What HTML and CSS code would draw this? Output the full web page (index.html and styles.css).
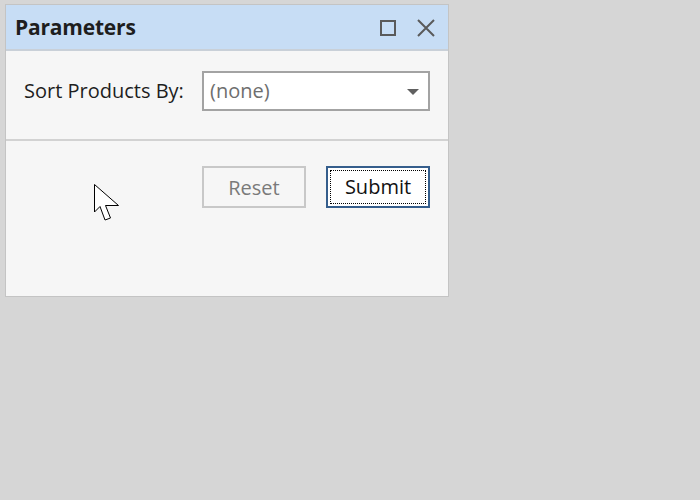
FILE: index.html
```html
<!DOCTYPE html>
<html>
<head>
<meta charset="utf-8">
<link rel="stylesheet" href="styles.css">
</head>
<body>
<div class="panel">
  <div class="header">
    <span class="title">Parameters</span>
    <div class="tools">
      <svg class="icon" width="18" height="18" viewBox="0 0 18 18"><rect x="2" y="2" width="14" height="14" fill="none" stroke="#5a5a5a" stroke-width="2"/></svg>
      <svg class="icon" width="20" height="20" viewBox="0 0 20 20"><path d="M2 2 L18 18 M18 2 L2 18" stroke="#5a5a5a" stroke-width="2" fill="none"/></svg>
    </div>
  </div>
  <div class="params">
    <span class="label">Sort Products By:</span>
    <div class="combo">
      <span class="value">(none)</span>
      <svg class="arrow" width="12" height="6" viewBox="0 0 12 6"><path d="M0 0 H12 L6 6 Z" fill="#606060"/></svg>
    </div>
  </div>
  <div class="actions">
    <div class="btn reset">Reset</div>
    <div class="btn submit"><span class="focus">Submit</span></div>
  </div>
</div>
<svg class="cursor" width="28" height="40" viewBox="0 0 28 40"><path d="M0.5 0.5 L0.5 28 L6 22.5 L11 36 L16.5 34 L11.5 21.5 L24.5 21.5 Z" fill="#fff" stroke="#000" stroke-width="1" stroke-linejoin="miter"/></svg>
</body>
</html>
```
FILE: styles.css
```css
html, body {
  margin: 0;
  padding: 0;
  background: #d6d6d6;
  font-family: "Open Sans", "Noto Sans", sans-serif;
}
body {
  width: 700px;
  height: 500px;
  position: relative;
  overflow: hidden;
}
.panel {
  margin: 4px 0 0 5px;
  width: 442px;
  border: 1px solid #c4c4c4;
  background: #f6f6f6;
}
.header {
  height: 44px;
  background: #c7ddf5;
  border-bottom: 2px solid #c9d0d8;
  display: flex;
  align-items: center;
  justify-content: space-between;
  padding: 0 12px 0 9px;
}
.title {
  font-weight: bold;
  font-size: 21px;
  color: #1e1e1e;
  letter-spacing: -0.2px;
}
.tools {
  display: flex;
  align-items: center;
  gap: 19px;
  padding-top: 1px;
}
.params {
  display: flex;
  align-items: flex-start;
  justify-content: space-between;
  padding: 20px 18px 0 18px;
  box-sizing: border-box;
  border-bottom: 2px solid #d2d2d2;
  height: 90px;
}
.label {
  font-size: 20px;
  color: #1e1e1e;
  line-height: 40px;
  padding-bottom: 2px;
}
.combo {
  height: 36px;
  border: 2px solid #a3a3a3;
  background: #fff;
  display: flex;
  align-items: center;
  justify-content: space-between;
  padding: 0 9px 0 6px;
  box-sizing: content-box;
  width: 209px;
}
.value {
  font-size: 20px;
  color: #6e6e6e;
  padding-bottom: 2px;
}
.arrow {
  margin-top: 1px;
}
.actions {
  height: 155px;
  display: flex;
  justify-content: flex-end;
  align-items: flex-start;
  gap: 20px;
  padding: 25px 18px 0 0;
  box-sizing: border-box;
}
.btn {
  width: 100px;
  height: 38px;
  border: 2px solid #c8c8c8;
  display: flex;
  align-items: center;
  justify-content: center;
  font-size: 20px;
  color: #7a7a7a;
}
.submit {
  border-color: #355e8c;
  background: #fff;
  color: #111;
  padding: 2px;
  width: 96px;
  height: 34px;
}
.focus {
  flex: 1;
  align-self: stretch;
  border: 1px dotted #000;
  display: flex;
  align-items: center;
  justify-content: center;
  padding-bottom: 1px;
}
.cursor {
  position: absolute;
  left: 94px;
  top: 184px;
}
```
